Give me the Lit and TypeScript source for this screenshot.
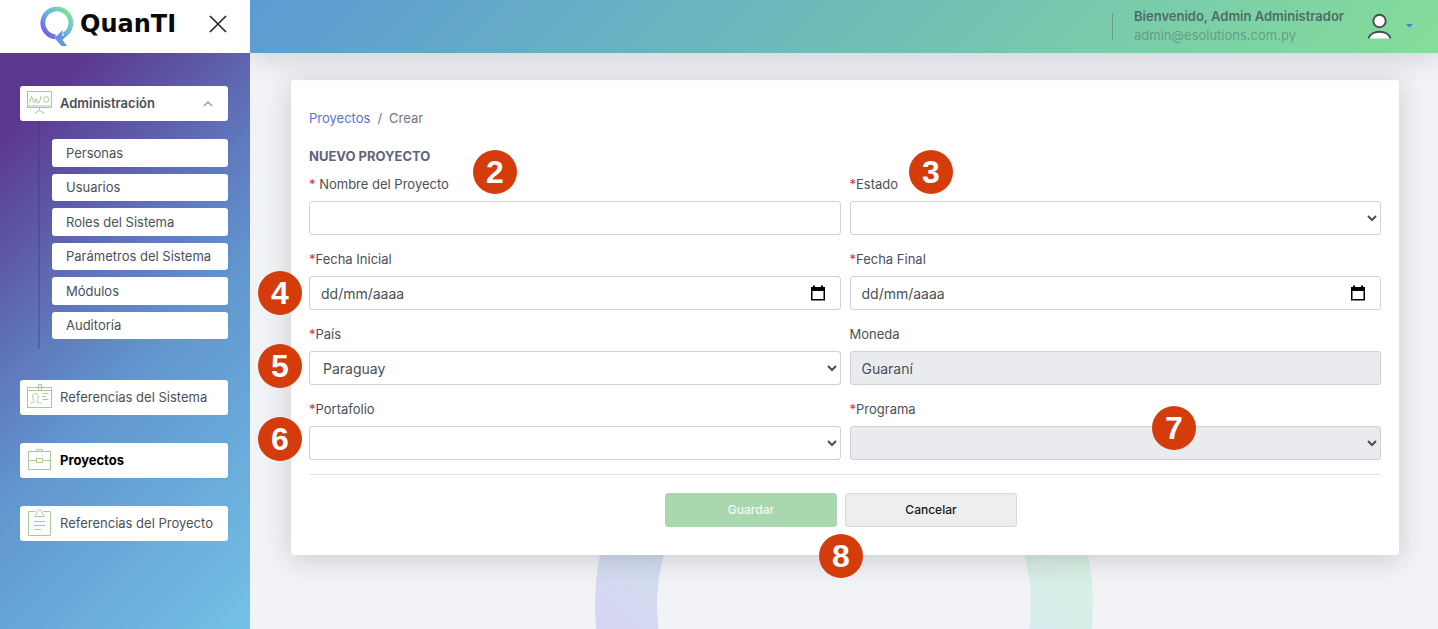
import { LitElement, html, svg, css } from "lit";
import { customElement, state } from "lit/decorators.js";

const icons = {
  board: svg`<rect x="1.500" y="2.500" width="24" height="16"/><path d="M1.500 17h24M13.500 18.500v3M9 25v-1l4.500-2.500L18 24v1M3.500 14l2-6.500 3 6.500 1.500-4.500 1.500 4.500h1.500l2.500-7.500"/><circle cx="20.200" cy="10.500" r="2.700"/>`,
  badge: svg`<rect x="1.500" y="4.500" width="24" height="20"/><path d="M1.500 7.500h24M12.500 7.500v-6h3v6M16.500 10.500h6M16.500 13.500h4M16.500 16.500h6"/><path d="M4.500 20.500c1-1.500 4-.5 3.500-3-2-2-2-7 1.500-7s3.500 5 1.500 7c-.5 2.500 3 1.500 4.500 3"/>`,
  briefcase: svg`<rect x="2.500" y="5.500" width="22" height="18"/><path d="M10.500 5.500v-2h6v2M2.500 14.500h8M16.500 14.500h8"/><rect x="10.500" y="12.500" width="6" height="4"/>`,
  clipboard: svg`<path d="M9.500 2.500h-7v24h22v-24h-7"/><path d="M8.500 7.500h10l-2.500-3.500C16 -.5 11 -.5 11 4zM8 12.500h11M8 16.500h11M8 20.500h7"/>`,
};

const markers = [
  { n: 2, x: 182, y: 70 },
  { n: 3, x: 618, y: 70 },
  { n: 4, x: -33, y: 191 },
  { n: 5, x: -33, y: 264 },
  { n: 6, x: -33, y: 337 },
  { n: 7, x: 861, y: 326 },
  { n: 8, x: 528, y: 454 },
];

@customElement("app-root")
export class AppRoot extends LitElement {
  @state() private adminOpen = true;

  static styles = css`
    :host {
      display: grid;
      grid-template-columns: 250px 1fr;
      min-height: 100vh;
      font: 13px/20px Inter, "Liberation Sans", sans-serif;
      color: #4c4f57;
    }
    *, *::before { box-sizing: border-box; }
    a { text-decoration: none; color: inherit; }
    button, input, select { font: inherit; color: inherit; margin: 0; }
    ul, ol { list-style: none; margin: 0; padding: 0; }

    .sidebar { position: relative; z-index: 2; display: flex; flex-direction: column; }
    .brand {
      height: 53px;
      background: #fff;
      display: flex;
      align-items: center;
      justify-content: space-between;
      padding: 0 22px 5px 38px;
    }
    .logo { display: flex; align-items: center; gap: 4px; color: #0a0a0a; }
    .logo-mark { width: 38px; height: 44px; }
    .logo-name { font: bold 24px/28px "DejaVu Sans", sans-serif; }
    .close { border: 0; background: none; padding: 0; width: 20px; height: 20px; }
    .close svg { display: block; width: 20px; height: 20px; }
    .nav {
      flex: 1;
      padding: 33px 22px 24px 20px;
      background: linear-gradient(135deg, #5c378f 0%, #5c378f 10%, #5f77bb 39%, #6196cf 55%, #73c1e6 100%);
    }
    .menu { display: flex; flex-direction: column; gap: 28px; }
    .item {
      display: flex;
      align-items: center;
      gap: 7px;
      width: 100%;
      height: 35px;
      padding: 0 14px 2px 6px;
      border: 0;
      border-radius: 3px;
      background: #fff;
      text-align: left;
    }
    .item.open { font-weight: 600; }
    .item.active { font-weight: 700; color: #000; }
    .icon { width: 27px; height: 27px; fill: none; stroke: #a9c99a; stroke-width: 1; flex: none; }
    .label { flex: 1; }
    .chevron { width: 12px; height: 8px; fill: none; stroke: #999; stroke-width: 1.500; }
    .submenu {
      display: grid;
      grid-template-rows: repeat(6, 1fr);
      gap: 7px;
      height: 228px;
      margin: 0 0 3px 18px;
      padding: 18px 0 10px 12px;
      border-left: 2px solid rgba(60, 50, 120, 0.3);
    }
    .subitem {
      display: flex;
      align-items: center;
      height: 100%;
      padding-left: 14px;
      border-radius: 3px;
      background: #fff;
    }

    .page { display: flex; flex-direction: column; min-width: 0; background: #f2f3f6; }
    .topbar {
      position: relative;
      z-index: 1;
      height: 53px;
      display: flex;
      justify-content: flex-end;
      align-items: center;
      padding: 0 25px 1px 0;
      background: linear-gradient(135deg, #5b9bd5 0%, #84de9a 100%);
      box-shadow: 0 4px 28px rgba(60, 65, 90, 0.2);
    }
    .user {
      display: flex;
      align-items: center;
      height: 27px;
      border-left: 1px solid rgba(70, 90, 90, 0.4);
      padding-left: 21px;
    }
    .who { line-height: 19px; color: rgba(60, 75, 75, 0.4); }
    .who strong { display: block; font-weight: 600; color: #4f6d68; }
    .account {
      display: flex;
      align-items: center;
      gap: 14px;
      border: 0;
      padding: 0;
      margin-left: 23px;
      background: none;
    }
    .avatar { width: 25px; height: 26px; }
    .caret { width: 7px; height: 4px; fill: #4b80d0; }

    .content {
      position: relative;
      flex: 1;
      overflow: hidden;
      padding: 27px 39px 74px 41px;
    }
    .ring {
      position: absolute;
      left: calc(50% - 249px);
      top: 303px;
      width: 498px;
      height: 498px;
      border-radius: 50%;
      background: linear-gradient(45deg, #d8d0f2 16%, #d6d8f2 26%, #d0deef 36%, #d4eaee 64%, #d7efe4 76%);
    }
    .ring::before {
      content: "";
      position: absolute;
      inset: 62px;
      border-radius: 50%;
      background: #f2f3f6;
    }
    .card {
      position: relative;
      padding: 28px 18px;
      border-radius: 3px;
      background: #fff;
      box-shadow: 0 4px 28px rgba(40, 42, 50, 0.2);
    }
    .crumbs { display: flex; gap: 7px; color: #72767e; }
    .crumbs a { color: #5473d8; }
    h1 {
      margin: 18px 0 8px;
      font-size: 13px;
      line-height: 20px;
      font-weight: 700;
      color: #5f637c;
    }
    .fields { display: grid; grid-template-columns: 1fr 1fr; gap: 14px 9px; }
    .field label { display: block; margin-bottom: 7px; }
    .required { color: #c9354b; }
    .control {
      display: block;
      width: 100%;
      height: 34px;
      padding: 0 11px;
      border: 1px solid #cfd1da;
      border-radius: 3px;
      background: #fff;
      font-size: 14px;
      line-height: 20px;
      color: #4c4f57;
      opacity: 1;
    }
    select.control { padding: 0 9px; }
    .control::placeholder { color: #4c4f57; }
    .control:disabled { background: #eaebef; }
    .datebox { position: relative; }
    .picker {
      position: absolute;
      right: 15px;
      top: 9px;
      width: 16px;
      height: 16px;
      padding: 0;
      border: 0;
      background: none;
    }
    .picker svg { display: block; width: 16px; height: 16px; }
    .actions {
      display: flex;
      justify-content: center;
      gap: 8px;
      margin-top: 14px;
      padding: 18px 8px 0 0;
      border-top: 1px solid #e2e3e8;
    }
    .btn {
      width: 172px;
      height: 34px;
      border: 1px solid #d8d8d8;
      border-radius: 3px;
      background: #eee;
      font-size: 12px;
      font-weight: 500;
      color: #16181b;
    }
    .btn.save { border-color: #a9d7ae; background: #a9d7ae; color: #f4fbf4; }
    .marker {
      position: absolute;
      display: grid;
      place-items: center;
      width: 44px;
      height: 44px;
      border-radius: 50%;
      background: #d53c0c;
      color: #fff;
      font: bold 32px/44px "Liberation Sans", sans-serif;
    }
  `;

  private icon(name: keyof typeof icons) {
    return html`<svg class="icon" viewBox="0 0 27 27" aria-hidden="true">${icons[name]}</svg>`;
  }

  private text(label: string, required: boolean, id: string) {
    return html`<label for=${id}>${required ? html`<span class="required">*</span>` : ""}${label}</label>`;
  }

  private date(label: string, id: string) {
    return html`<div class="field">
      ${this.text(label, true, id)}
      <div class="datebox">
        <input class="control" id=${id} type="text" placeholder="dd/mm/aaaa" />
        <button class="picker" type="button" aria-label=${`Abrir calendario: ${label}`}>
          <svg viewBox="0 0 16 16"><path d="M1 2h2V.5h2V2h6V.5h2V2h2v13.500H1zM2.500 6v8h11V6z" fill="#000" fill-rule="evenodd"/></svg>
        </button>
      </div>
    </div>`;
  }

  private select(label: string, id: string, value = "", disabled = false) {
    return html`<div class="field">
      ${this.text(label, true, id)}
      <select class="control" id=${id} ?disabled=${disabled}><option>${value}</option></select>
    </div>`;
  }

  render() {
    const sub = ["Personas", "Usuarios", "Roles del Sistema", "Parámetros del Sistema", "Módulos", "Auditoría"];
    return html`
      <aside class="sidebar">
        <div class="brand">
          <a class="logo" href="#">
            <svg class="logo-mark" viewBox="0 0 38 44" aria-hidden="true">
              <defs>
                <linearGradient id="q" x1="0" y1="1" x2="1" y2="0">
                  <stop offset=".1" stop-color="#7b5fe0"/><stop offset=".5" stop-color="#62b4e4"/><stop offset=".9" stop-color="#82e09a"/>
                </linearGradient>
              </defs>
              <path d="M17.500 34.900A14 14 0 1 1 26 33" fill="none" stroke="url(#q)" stroke-width="4.800"/>
              <path d="M16.500 36L24.800 28l-.6 6 5.300-1.500L24.500 38l4.500 6h-5.500z" fill="#6297e2"/>
            </svg>
            <span class="logo-name">QuanTI</span>
          </a>
          <button class="close" type="button" aria-label="Cerrar menú">
            <svg viewBox="0 0 20 20"><path d="M2 2l16 16M18 2L2 18" stroke="#222" stroke-width="1.600"/></svg>
          </button>
        </div>
        <nav class="nav">
          <ul class="menu">
            <li>
              <button class="item open" type="button" aria-expanded=${this.adminOpen} @click=${() => (this.adminOpen = !this.adminOpen)}>
                ${this.icon("board")}<span class="label">Administración</span>
                <svg class="chevron" viewBox="0 0 12 8"><path d="M2 7l4-4 4 4"/></svg>
              </button>
              ${this.adminOpen
                ? html`<ul class="submenu">${sub.map((s) => html`<li><a class="subitem" href="#">${s}</a></li>`)}</ul>`
                : ""}
            </li>
            <li><a class="item" href="#">${this.icon("badge")}<span>Referencias del Sistema</span></a></li>
            <li><a class="item active" href="#">${this.icon("briefcase")}<span>Proyectos</span></a></li>
            <li><a class="item" href="#">${this.icon("clipboard")}<span>Referencias del Proyecto</span></a></li>
          </ul>
        </nav>
      </aside>
      <div class="page">
        <header class="topbar">
          <div class="user">
            <div class="who"><strong>Bienvenido, Admin Administrador</strong>admin@esolutions.com.py</div>
            <button class="account" type="button" aria-label="Cuenta">
              <svg class="avatar" viewBox="0 0 25 26">
                <circle cx="12.500" cy="8" r="6.200" fill="#fff" stroke="#4a4a52" stroke-width="1.900"/>
                <path d="M1.500 25.500C4 16.500 21 16.500 23.500 25.500" fill="#fff" stroke="#4a4a52" stroke-width="1.900"/>
              </svg>
              <svg class="caret" viewBox="0 0 7 4"><path d="M0 0h7L3.500 3.500z"/></svg>
            </button>
          </div>
        </header>
        <main class="content">
          <div class="ring"></div>
          <form class="card">
            <nav aria-label="Ruta"><ol class="crumbs"><li><a href="#">Proyectos</a></li><li>/</li><li>Crear</li></ol></nav>
            <h1>NUEVO PROYECTO</h1>
            <div class="fields">
              <div class="field">
                ${this.text(" Nombre del Proyecto", true, "nombre")}
                <input class="control" id="nombre" type="text" />
              </div>
              ${this.select("Estado", "estado")}
              ${this.date("Fecha Inicial", "inicio")}
              ${this.date("Fecha Final", "fin")}
              ${this.select("País", "pais", "Paraguay")}
              <div class="field">
                ${this.text("Moneda", false, "moneda")}
                <input class="control" id="moneda" type="text" value="Guaraní" disabled />
              </div>
              ${this.select("Portafolio", "portafolio")}
              ${this.select("Programa", "programa", "", true)}
            </div>
            <div class="actions">
              <button class="btn save" type="button">Guardar</button>
              <button class="btn" type="button">Cancelar</button>
            </div>
            ${markers.map((m) => html`<span class="marker" style="left:${m.x}px;top:${m.y}px">${m.n}</span>`)}
          </form>
        </main>
      </div>
    `;
  }
}
